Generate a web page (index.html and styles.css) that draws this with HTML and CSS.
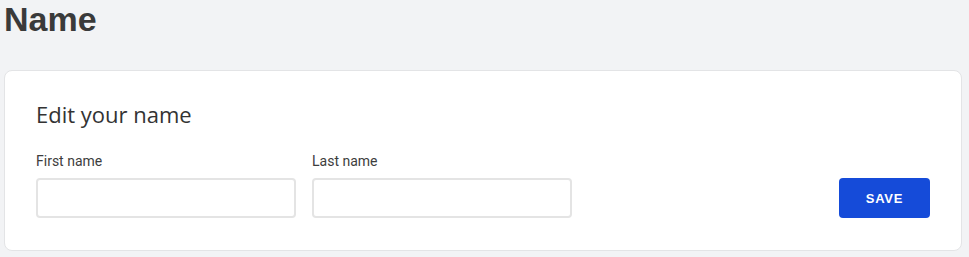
FILE: index.html
```html
<!DOCTYPE html>
<html lang="en">
<head>
<meta charset="utf-8">
<title>Name</title>
<link rel="stylesheet" href="styles.css">
</head>
<body>
<main class="page">
  <h1 class="page-title">Name</h1>
  <section class="card">
    <h2 class="card-title">Edit your name</h2>
    <form class="name-form">
      <label class="field">
        <span class="field-label">First name</span>
        <input class="field-input" type="text">
      </label>
      <label class="field">
        <span class="field-label">Last name</span>
        <input class="field-input" type="text">
      </label>
      <button class="save-btn" type="button">SAVE</button>
    </form>
  </section>
</main>
</body>
</html>
```

FILE: styles.css
```css
html, body {
  margin: 0;
  padding: 0;
  background: #f2f3f5;
}
.page {
  padding: 0 7px 0 4px;
}
.page-title {
  margin: 0 0 32px;
  font-family: "Liberation Sans", Arial, sans-serif;
  font-weight: 700;
  font-size: 34px;
  line-height: 38px;
  color: #3a3a3a;
}
.card {
  background: #ffffff;
  border: 1px solid #e3e4e6;
  border-radius: 8px;
  padding: 29px 31px 32px;
}
.card-title {
  margin: 0 0 25px;
  font-family: "Open Sans", sans-serif;
  font-weight: 400;
  font-size: 22px;
  line-height: 28px;
  color: #333333;
}
.name-form {
  display: flex;
  align-items: flex-end;
  gap: 16px;
}
.field {
  display: flex;
  flex-direction: column;
  gap: 9px;
}
.field-label {
  font-family: Roboto, sans-serif;
  font-size: 14px;
  line-height: 16px;
  color: #3d3d3d;
}
.field-input {
  box-sizing: border-box;
  width: 260px;
  height: 40px;
  margin: 0;
  border: 2px solid #e4e4e4;
  border-radius: 4px;
  background: #fff;
  padding: 0 10px;
  font-family: Roboto, sans-serif;
  font-size: 14px;
  outline: none;
}
.save-btn {
  margin-left: auto;
  box-sizing: border-box;
  width: 91px;
  height: 40px;
  border: none;
  border-radius: 4px;
  background: #154bd9;
  color: #ffffff;
  font-family: "Liberation Sans", Arial, sans-serif;
  font-weight: 700;
  font-size: 13px;
  letter-spacing: 0.8px;
  padding: 0;
  cursor: pointer;
}
```
